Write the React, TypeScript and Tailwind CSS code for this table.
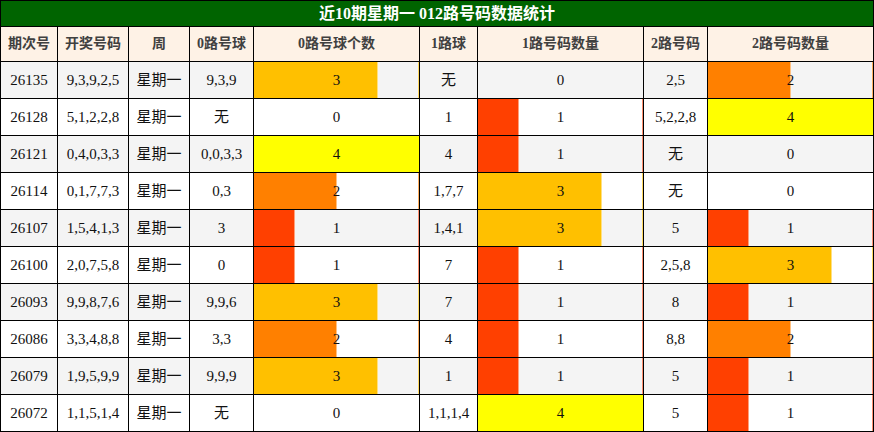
import React from "react";

type Row = [string, string, string, string, number, string, number, string, number];

const rows: Row[] = [
  ["26135", "9,3,9,2,5", "星期一", "9,3,9", 3, "无", 0, "2,5", 2],
  ["26128", "5,1,2,2,8", "星期一", "无", 0, "1", 1, "5,2,2,8", 4],
  ["26121", "0,4,0,3,3", "星期一", "0,0,3,3", 4, "4", 1, "无", 0],
  ["26114", "0,1,7,7,3", "星期一", "0,3", 2, "1,7,7", 3, "无", 0],
  ["26107", "1,5,4,1,3", "星期一", "3", 1, "1,4,1", 3, "5", 1],
  ["26100", "2,0,7,5,8", "星期一", "0", 1, "7", 1, "2,5,8", 3],
  ["26093", "9,9,8,7,6", "星期一", "9,9,6", 3, "7", 1, "8", 1],
  ["26086", "3,3,4,8,8", "星期一", "3,3", 2, "4", 1, "8,8", 2],
  ["26079", "1,9,5,9,9", "星期一", "9,9,9", 3, "1", 1, "5", 1],
  ["26072", "1,1,5,1,4", "星期一", "无", 0, "1,1,1,4", 4, "5", 1],
];

const headers = ["期次号", "开奖号码", "周", "0路号球", "0路号球个数", "1路球", "1路号码数量", "2路号码", "2路号码数量"];

const barColor: Record<number, string> = {
  1: "bg-[#ff4000] border-r border-[#ffa07a]",
  2: "bg-[#ff8000] border-r border-[#ffc080]",
  3: "bg-[#ffc000] border-r border-[#ffe080]",
  4: "bg-[#ffff00]",
};
const edgeColor: Record<number, string> = {
  1: "bg-[#ff9070]",
  2: "bg-[#ffb060]",
  3: "bg-[#ffd860]",
  4: "bg-[#ffff00]",
};

function Cell({ children, bg }: { children: React.ReactNode; bg: string }) {
  return <div className={`${bg} flex items-center justify-center text-[15px] text-[#111]`}>{children}</div>;
}

function BarCell({ n, bg }: { n: number; bg: string }) {
  const w = Math.round((n * 165) / 4);
  return (
    <div className={`${bg} relative flex items-center justify-center text-[15px] text-[#111]`}>
      {n > 0 && (
        <>
          <div className={`absolute left-0 top-0 bottom-0 ${barColor[n]}`} style={{ width: w }} />
          <div className={`absolute right-0 top-0 bottom-0 w-px ${edgeColor[n]}`} />
        </>
      )}
      <span className="relative">{n}</span>
    </div>
  );
}

export default function App() {
  return (
    <div
      className="w-[874px] h-[432px] bg-black p-px grid gap-px grid-cols-[56px_70px_60px_63px_165px_57px_165px_63px_165px] grid-rows-[25px_34px_repeat(10,36px)] leading-none"
      style={{ fontFamily: '"Liberation Serif", "Noto Sans CJK SC", serif' }}
    >
      <div className="col-span-9 bg-[#006400] text-white font-bold text-[16px] flex items-center justify-center">
        近10期星期一 012路号码数据统计
      </div>
      {headers.map((h) => (
        <div key={h} className="bg-[#fef2e6] flex items-center justify-center text-[14px] font-bold text-[#404040]">
          {h}
        </div>
      ))}
      {rows.map((r, i) => {
        const bg = i % 2 === 0 ? "bg-[#f4f4f4]" : "bg-white";
        return (
          <React.Fragment key={r[0]}>
            <Cell bg={bg}>{r[0]}</Cell>
            <Cell bg={bg}>{r[1]}</Cell>
            <Cell bg={bg}>{r[2]}</Cell>
            <Cell bg={bg}>{r[3]}</Cell>
            <BarCell n={r[4]} bg={bg} />
            <Cell bg={bg}>{r[5]}</Cell>
            <BarCell n={r[6]} bg={bg} />
            <Cell bg={bg}>{r[7]}</Cell>
            <BarCell n={r[8]} bg={bg} />
          </React.Fragment>
        );
      })}
    </div>
  );
}
